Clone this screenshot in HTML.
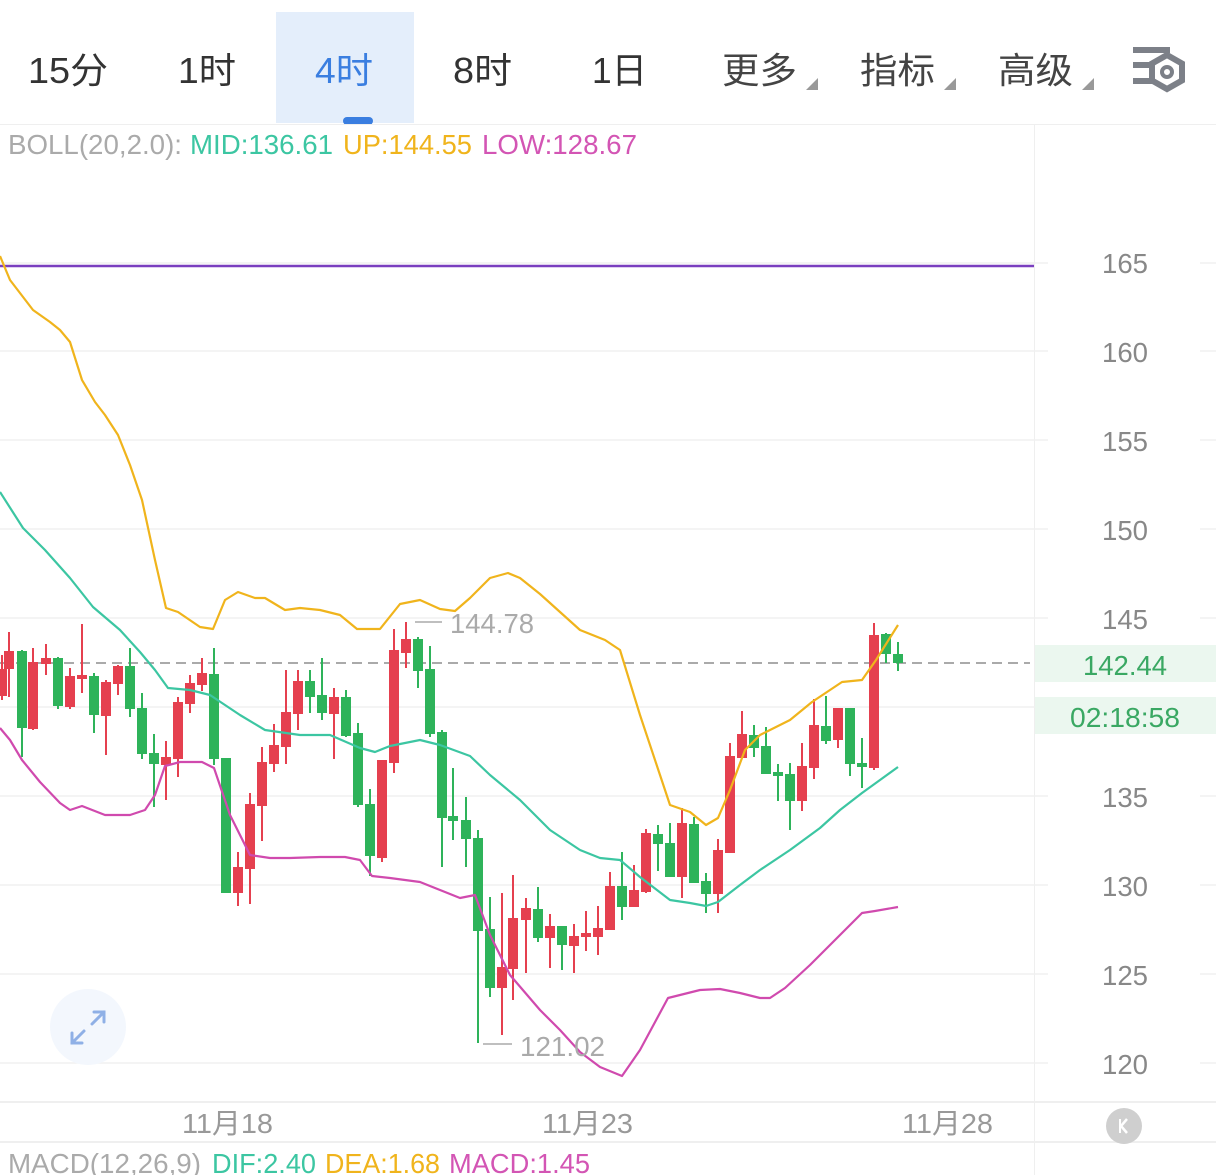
<!DOCTYPE html>
<html><head><meta charset="utf-8"><style>
html,body{margin:0;padding:0;background:#fff;width:1216px;height:1175px;overflow:hidden}
svg{display:block}
text{font-family:"Liberation Sans","Noto Sans CJK SC",sans-serif}
</style></head><body>
<svg width="1216" height="1175" viewBox="0 0 1216 1175" xmlns="http://www.w3.org/2000/svg">
<!-- tab bar -->
<rect x="276" y="12" width="138" height="111" fill="#e4eefb"/>
<rect x="343" y="117" width="30" height="8" rx="4" fill="#3a7ee0"/>
<line x1="0" y1="124.5" x2="1216" y2="124.5" stroke="#efefef"/>
<g font-size="36" fill="#333">
<text x="28" y="83" textLength="80" lengthAdjust="spacingAndGlyphs">15分</text>
<text x="178" y="83" textLength="58" lengthAdjust="spacingAndGlyphs">1时</text>
<text x="315" y="83" textLength="58" lengthAdjust="spacingAndGlyphs" fill="#3a7ee0">4时</text>
<text x="453" y="83" textLength="59" lengthAdjust="spacingAndGlyphs">8时</text>
<text x="592" y="83" textLength="55" lengthAdjust="spacingAndGlyphs">1日</text>
<text x="722" y="83" textLength="75" lengthAdjust="spacingAndGlyphs" fill="#444">更多</text>
<text x="860" y="83" textLength="75" lengthAdjust="spacingAndGlyphs" fill="#444">指标</text>
<text x="998" y="83" textLength="75" lengthAdjust="spacingAndGlyphs" fill="#444">高级</text>
</g>
<g fill="#999">
<polygon points="818,78 818,90 806,90"/>
<polygon points="956,78 956,90 944,90"/>
<polygon points="1094,78 1094,90 1082,90"/>
</g>
<g fill="#7c8088">
<rect x="1133" y="47" width="37" height="6"/>
<rect x="1133" y="62" width="20" height="6"/>
<rect x="1133" y="78" width="20" height="6"/>
<polygon points="1167,55 1182,63.5 1182,80.5 1167,89 1152,80.5 1152,63.5" fill="none" stroke="#7c8088" stroke-width="6"/>
<circle cx="1167" cy="72" r="5" fill="none" stroke="#7c8088" stroke-width="4"/>
</g>
<!-- BOLL header -->
<g font-size="28">
<text x="8" y="154" fill="#aaa" textLength="174" lengthAdjust="spacingAndGlyphs">BOLL(20,2.0):</text>
<text x="190" y="154" fill="#3cc6a2" textLength="143" lengthAdjust="spacingAndGlyphs">MID:136.61</text>
<text x="343" y="154" fill="#f0b41c" textLength="129" lengthAdjust="spacingAndGlyphs">UP:144.55</text>
<text x="482" y="154" fill="#d355b4" textLength="155" lengthAdjust="spacingAndGlyphs">LOW:128.67</text>
</g>
<!-- axis divider -->
<line x1="1034.5" y1="125" x2="1034.5" y2="1175" stroke="#efefef"/>
<!-- grid -->
<g stroke="#f1f1f1" stroke-width="1.5">
<line x1="0" y1="263" x2="1048" y2="263"/><line x1="0" y1="351" x2="1048" y2="351"/>
<line x1="0" y1="440" x2="1048" y2="440"/><line x1="0" y1="529" x2="1048" y2="529"/>
<line x1="0" y1="618" x2="1048" y2="618"/><line x1="0" y1="707" x2="1048" y2="707"/>
<line x1="0" y1="796" x2="1048" y2="796"/><line x1="0" y1="885" x2="1048" y2="885"/>
<line x1="0" y1="974" x2="1048" y2="974"/><line x1="0" y1="1063" x2="1048" y2="1063"/>
<line x1="1200" y1="263" x2="1216" y2="263"/><line x1="1200" y1="351" x2="1216" y2="351"/>
<line x1="1200" y1="440" x2="1216" y2="440"/><line x1="1200" y1="529" x2="1216" y2="529"/>
<line x1="1200" y1="618" x2="1216" y2="618"/><line x1="1200" y1="707" x2="1216" y2="707"/>
<line x1="1200" y1="796" x2="1216" y2="796"/><line x1="1200" y1="885" x2="1216" y2="885"/>
<line x1="1200" y1="974" x2="1216" y2="974"/><line x1="1200" y1="1063" x2="1216" y2="1063"/>
</g>
<g font-size="28" fill="#888" text-anchor="middle">
<text x="1125" y="273" textLength="46" lengthAdjust="spacingAndGlyphs">165</text>
<text x="1125" y="362" textLength="46" lengthAdjust="spacingAndGlyphs">160</text>
<text x="1125" y="451" textLength="46" lengthAdjust="spacingAndGlyphs">155</text>
<text x="1125" y="540" textLength="46" lengthAdjust="spacingAndGlyphs">150</text>
<text x="1125" y="629" textLength="46" lengthAdjust="spacingAndGlyphs">145</text>
<text x="1125" y="807" textLength="46" lengthAdjust="spacingAndGlyphs">135</text>
<text x="1125" y="896" textLength="46" lengthAdjust="spacingAndGlyphs">130</text>
<text x="1125" y="985" textLength="46" lengthAdjust="spacingAndGlyphs">125</text>
<text x="1125" y="1074" textLength="46" lengthAdjust="spacingAndGlyphs">120</text>
</g>
<rect x="1035" y="645" width="181" height="37" fill="#ebf7ef"/>
<rect x="1035" y="697" width="181" height="37" fill="#ebf7ef"/>
<g font-size="28" fill="#3aa863" text-anchor="middle">
<text x="1125" y="675" textLength="84" lengthAdjust="spacingAndGlyphs">142.44</text>
<text x="1125" y="727" textLength="110" lengthAdjust="spacingAndGlyphs">02:18:58</text>
</g>
<!-- purple line -->
<line x1="0" y1="266" x2="1034" y2="266" stroke="#7a3fbf" stroke-width="2.5"/>
<!-- dashed current price -->
<line x1="0" y1="663" x2="1030" y2="663" stroke="#aaa" stroke-width="2" stroke-dasharray="10,6"/>
<!-- candles -->
<g stroke-width="2">
<g stroke="#e5404f" fill="#e5404f">
<line x1="2" y1="655" x2="2" y2="700"/><rect x="-2" y="670" width="8" height="25"/>
<line x1="9" y1="632" x2="9" y2="697"/><rect x="5" y="652" width="8" height="16"/>
<line x1="33" y1="648" x2="33" y2="730"/><rect x="29" y="663" width="8" height="65"/>
<line x1="46" y1="644" x2="46" y2="675"/><rect x="42" y="659" width="8" height="4"/>
<line x1="70" y1="668" x2="70" y2="709"/><rect x="66" y="677" width="8" height="29"/>
<line x1="82" y1="624" x2="82" y2="693"/><rect x="78" y="676" width="8" height="2"/>
<line x1="106" y1="680" x2="106" y2="755"/><rect x="102" y="683" width="8" height="32"/>
<line x1="118" y1="665" x2="118" y2="695"/><rect x="114" y="667" width="8" height="16"/>
<line x1="166" y1="741" x2="166" y2="800"/><rect x="162" y="758" width="8" height="6"/>
<line x1="178" y1="697" x2="178" y2="777"/><rect x="174" y="703" width="8" height="55"/>
<line x1="190" y1="675" x2="190" y2="713"/><rect x="186" y="684" width="8" height="19"/>
<line x1="202" y1="658" x2="202" y2="691"/><rect x="198" y="674" width="8" height="10"/>
<line x1="238" y1="852" x2="238" y2="906"/><rect x="234" y="868" width="8" height="24"/>
<line x1="250" y1="793" x2="250" y2="904"/><rect x="246" y="805" width="8" height="63"/>
<line x1="262" y1="747" x2="262" y2="841"/><rect x="258" y="763" width="8" height="42"/>
<line x1="274" y1="724" x2="274" y2="772"/><rect x="270" y="746" width="8" height="17"/>
<line x1="286" y1="670" x2="286" y2="764"/><rect x="282" y="713" width="8" height="33"/>
<line x1="298" y1="670" x2="298" y2="730"/><rect x="294" y="682" width="8" height="31"/>
<line x1="334" y1="688" x2="334" y2="759"/><rect x="330" y="698" width="8" height="15"/>
<line x1="382" y1="761" x2="382" y2="862"/><rect x="378" y="761" width="8" height="96"/>
<line x1="394" y1="629" x2="394" y2="773"/><rect x="390" y="651" width="8" height="111"/>
<line x1="406" y1="622" x2="406" y2="668"/><rect x="402" y="640" width="8" height="12"/>
<line x1="502" y1="893" x2="502" y2="1035"/><rect x="498" y="968" width="8" height="19"/>
<line x1="513" y1="875" x2="513" y2="1000"/><rect x="509" y="919" width="8" height="49"/>
<line x1="526" y1="898" x2="526" y2="973"/><rect x="522" y="909" width="8" height="10"/>
<line x1="550" y1="914" x2="550" y2="968"/><rect x="546" y="927" width="8" height="10"/>
<line x1="574" y1="924" x2="574" y2="973"/><rect x="570" y="937" width="8" height="8"/>
<line x1="586" y1="911" x2="586" y2="951"/><rect x="582" y="934" width="8" height="2"/>
<line x1="598" y1="906" x2="598" y2="955"/><rect x="594" y="929" width="8" height="7"/>
<line x1="610" y1="872" x2="610" y2="929"/><rect x="606" y="887" width="8" height="42"/>
<line x1="634" y1="865" x2="634" y2="906"/><rect x="630" y="891" width="8" height="15"/>
<line x1="646" y1="829" x2="646" y2="893"/><rect x="642" y="834" width="8" height="57"/>
<line x1="682" y1="808" x2="682" y2="898"/><rect x="678" y="824" width="8" height="52"/>
<line x1="718" y1="839" x2="718" y2="913"/><rect x="714" y="851" width="8" height="42"/>
<line x1="730" y1="743" x2="730" y2="853"/><rect x="726" y="757" width="8" height="95"/>
<line x1="742" y1="711" x2="742" y2="757"/><rect x="738" y="735" width="8" height="22"/>
<line x1="802" y1="743" x2="802" y2="811"/><rect x="798" y="767" width="8" height="33"/>
<line x1="814" y1="699" x2="814" y2="779"/><rect x="810" y="726" width="8" height="41"/>
<line x1="838" y1="709" x2="838" y2="748"/><rect x="834" y="709" width="8" height="30"/>
<line x1="874" y1="623" x2="874" y2="770"/><rect x="870" y="636" width="8" height="131"/>
</g>
<g stroke="#2eb35a" fill="#2eb35a">
<line x1="22" y1="650" x2="22" y2="757"/><rect x="18" y="652" width="8" height="75"/>
<line x1="58" y1="657" x2="58" y2="709"/><rect x="54" y="659" width="8" height="46"/>
<line x1="94" y1="673" x2="94" y2="733"/><rect x="90" y="677" width="8" height="37"/>
<line x1="130" y1="648" x2="130" y2="717"/><rect x="126" y="667" width="8" height="41"/>
<line x1="142" y1="693" x2="142" y2="759"/><rect x="138" y="709" width="8" height="44"/>
<line x1="154" y1="734" x2="154" y2="807"/><rect x="150" y="754" width="8" height="9"/>
<line x1="214" y1="648" x2="214" y2="765"/><rect x="210" y="675" width="8" height="83"/>
<line x1="226" y1="759" x2="226" y2="892"/><rect x="222" y="759" width="8" height="133"/>
<line x1="310" y1="670" x2="310" y2="713"/><rect x="306" y="682" width="8" height="14"/>
<line x1="322" y1="658" x2="322" y2="720"/><rect x="318" y="696" width="8" height="16"/>
<line x1="346" y1="690" x2="346" y2="737"/><rect x="342" y="698" width="8" height="37"/>
<line x1="358" y1="723" x2="358" y2="807"/><rect x="354" y="734" width="8" height="70"/>
<line x1="370" y1="789" x2="370" y2="876"/><rect x="366" y="805" width="8" height="50"/>
<line x1="418" y1="637" x2="418" y2="688"/><rect x="414" y="640" width="8" height="30"/>
<line x1="430" y1="646" x2="430" y2="737"/><rect x="426" y="670" width="8" height="63"/>
<line x1="442" y1="730" x2="442" y2="867"/><rect x="438" y="733" width="8" height="84"/>
<line x1="453" y1="768" x2="453" y2="840"/><rect x="449" y="817" width="8" height="3"/>
<line x1="466" y1="797" x2="466" y2="867"/><rect x="462" y="821" width="8" height="17"/>
<line x1="478" y1="830" x2="478" y2="1043"/><rect x="474" y="839" width="8" height="91"/>
<line x1="490" y1="897" x2="490" y2="997"/><rect x="486" y="930" width="8" height="57"/>
<line x1="538" y1="887" x2="538" y2="942"/><rect x="534" y="910" width="8" height="27"/>
<line x1="562" y1="927" x2="562" y2="970"/><rect x="558" y="927" width="8" height="17"/>
<line x1="622" y1="852" x2="622" y2="920"/><rect x="618" y="887" width="8" height="19"/>
<line x1="658" y1="825" x2="658" y2="871"/><rect x="654" y="835" width="8" height="8"/>
<line x1="670" y1="823" x2="670" y2="876"/><rect x="666" y="844" width="8" height="32"/>
<line x1="694" y1="817" x2="694" y2="883"/><rect x="690" y="825" width="8" height="57"/>
<line x1="706" y1="873" x2="706" y2="913"/><rect x="702" y="882" width="8" height="11"/>
<line x1="754" y1="725" x2="754" y2="757"/><rect x="750" y="736" width="8" height="11"/>
<line x1="766" y1="727" x2="766" y2="773"/><rect x="762" y="747" width="8" height="26"/>
<line x1="778" y1="764" x2="778" y2="801"/><rect x="774" y="773" width="8" height="2"/>
<line x1="790" y1="763" x2="790" y2="830"/><rect x="786" y="775" width="8" height="25"/>
<line x1="826" y1="696" x2="826" y2="744"/><rect x="822" y="727" width="8" height="13"/>
<line x1="850" y1="709" x2="850" y2="776"/><rect x="846" y="709" width="8" height="54"/>
<line x1="862" y1="738" x2="862" y2="788"/><rect x="858" y="764" width="8" height="2"/>
<line x1="886" y1="633" x2="886" y2="663"/><rect x="882" y="635" width="8" height="18"/>
<line x1="898" y1="642" x2="898" y2="671"/><rect x="894" y="655" width="8" height="7"/>
</g>
</g>
<!-- BOLL lines -->
<g fill="none" stroke-width="2.2" stroke-linejoin="round">
<polyline stroke="#f0b41c" points="0,256 10,280 33,310 50,322 60,330 70,342 82,380 95,402 105,415 118,435 130,465 142,500 155,560 166,608 178,612 200,627 213,629 225,600 238,592 255,598 265,598 285,610 300,608 320,610 340,615 357,629 380,629 400,604 420,600 440,609 455,611 470,598 490,578 508,573 520,578 540,594 560,612 580,630 605,640 620,650 640,715 660,775 670,805 690,812 706,825 718,818 730,790 745,750 760,735 790,720 812,702 830,690 842,682 862,680 876,660 898,625"/>
<polyline stroke="#3cc6a2" points="0,492 23,528 45,550 70,578 93,607 120,630 140,652 155,670 168,688 190,690 210,695 240,715 265,730 300,735 330,735 360,748 375,752 390,746 420,740 440,745 470,756 490,775 520,800 550,830 580,850 600,858 620,860 640,877 670,900 690,903 706,906 718,902 740,885 760,870 790,850 820,828 840,810 862,793 880,780 898,767"/>
<polyline stroke="#d04aae" points="0,728 10,740 22,760 40,782 60,803 70,810 82,806 105,815 130,815 145,810 155,795 165,766 180,762 202,762 214,768 230,815 250,855 270,858 290,858 320,857 345,857 360,860 372,876 390,878 420,882 440,890 460,898 475,895 490,935 510,975 540,1010 560,1030 580,1052 600,1067 622,1076 640,1050 668,998 680,995 700,990 720,989 740,993 760,998 770,998 785,988 810,965 830,945 850,925 862,913 875,911 898,907"/>
</g>
<!-- high/low markers -->
<line x1="415" y1="622" x2="442" y2="622" stroke="#aaa" stroke-width="1.5"/>
<text x="450" y="633" font-size="28" fill="#aaa" textLength="84" lengthAdjust="spacingAndGlyphs">144.78</text>
<line x1="483" y1="1044" x2="512" y2="1044" stroke="#aaa" stroke-width="1.5"/>
<text x="520" y="1056" font-size="28" fill="#aaa" textLength="85" lengthAdjust="spacingAndGlyphs">121.02</text>
<!-- expand button -->
<circle cx="88" cy="1027" r="38" fill="#f3f7fd"/>
<g stroke="#8fb0e6" stroke-width="3" fill="none" stroke-linecap="round">
<line x1="92" y1="1024" x2="104" y2="1012"/><polyline points="94,1012 104,1012 104,1022"/>
<line x1="84" y1="1031" x2="72" y2="1043"/><polyline points="72,1033 72,1043 82,1043"/>
</g>
<!-- bottom axis -->
<line x1="0" y1="1102" x2="1216" y2="1102" stroke="#efefef" stroke-width="2"/>
<line x1="0" y1="1142" x2="1216" y2="1142" stroke="#efefef" stroke-width="2"/>
<g font-size="28" fill="#999">
<text x="182" y="1133" textLength="91" lengthAdjust="spacingAndGlyphs">11月18</text>
<text x="542" y="1133" textLength="91" lengthAdjust="spacingAndGlyphs">11月23</text>
<text x="902" y="1133" textLength="91" lengthAdjust="spacingAndGlyphs">11月28</text>
</g>
<circle cx="1124" cy="1126" r="18" fill="#cfcfcf"/>
<polyline points="1127,1119 1121,1126 1127,1133" fill="none" stroke="#fff" stroke-width="2.5"/>
<line x1="1120" y1="1119" x2="1120" y2="1133" stroke="#fff" stroke-width="2"/>
<!-- MACD header -->
<g font-size="28">
<text x="8" y="1173" fill="#aaa" textLength="193" lengthAdjust="spacingAndGlyphs">MACD(12,26,9)</text>
<text x="212" y="1173" fill="#3cc6a2" textLength="104" lengthAdjust="spacingAndGlyphs">DIF:2.40</text>
<text x="325" y="1173" fill="#f0b41c" textLength="115" lengthAdjust="spacingAndGlyphs">DEA:1.68</text>
<text x="449" y="1173" fill="#d355b4" textLength="141" lengthAdjust="spacingAndGlyphs">MACD:1.45</text>
</g>
</svg>
</body></html>
